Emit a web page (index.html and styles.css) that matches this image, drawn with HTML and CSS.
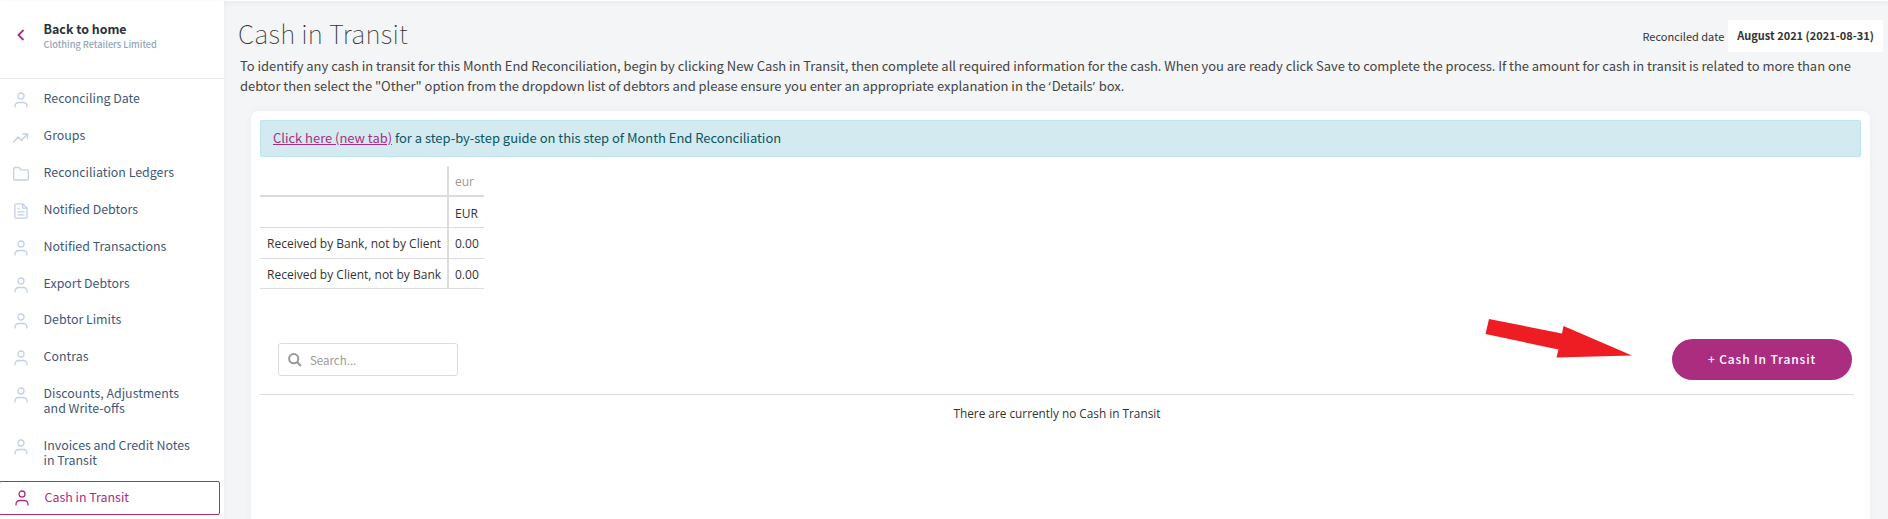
FILE: index.html
```html
<!DOCTYPE html>
<html lang="en">
<head>
<meta charset="utf-8">
<meta name="viewport" content="width=device-width, initial-scale=1.0">
<title>Cash in Transit</title>
<link rel="stylesheet" href="styles.css">
</head>
<body>
<svg class="sprite">
    <symbol id="user" viewBox="0 0 16 16"><circle cx="8" cy="4" r="3"/><path d="M2 15.5v-1.3a3.7 3.7 0 0 1 3.7-3.7h4.6a3.7 3.7 0 0 1 3.7 3.7v1.3"/></symbol>
    <symbol id="trend" viewBox="0 0 16 16"><path d="M.5 13.500l4.500-5.500 3.500 3.500L14.500 5M9.500 5h5v5"/></symbol>
    <symbol id="folder" viewBox="0 0 16 16"><path d="M2 1.5h4l2 2.4h6c.8 0 1.3.5 1.3 1.2v7.6c0 .8-.5 1.3-1.3 1.3H2c-.8 0-1.3-.5-1.3-1.3V2.8c0-.8.5-1.3 1.3-1.3z"/></symbol>
    <symbol id="file" viewBox="0 0 16 16"><path d="M3 .8h6.8L14 5v9c0 .7-.4 1.2-1.1 1.2H3c-.7 0-1.1-.5-1.1-1.2V2C1.900 1.300 2.300.8 3 .8zM9.600 1v4.200H14M4.500 5.800h2M4.500 8.800h7M4.500 11.800h7"/></symbol>
</svg>
<div class="page">
    <nav class="sidebar">
        <a class="back" href="#">
            <svg class="chevron" viewBox="0 0 8 12"><path d="M6.500 1L1.500 6l5 5"/></svg>
            <span>
                <strong>Back to home</strong>
                <small>Clothing Retailers Limited</small>
            </span>
        </a>
        <ul class="menu">
            <li><a href="#"><svg class="icon"><use href="#user"/></svg><span>Reconciling Date</span></a></li>
            <li><a href="#"><svg class="icon"><use href="#trend"/></svg><span>Groups</span></a></li>
            <li><a href="#"><svg class="icon"><use href="#folder"/></svg><span>Reconciliation Ledgers</span></a></li>
            <li><a href="#"><svg class="icon"><use href="#file"/></svg><span>Notified Debtors</span></a></li>
            <li><a href="#"><svg class="icon"><use href="#user"/></svg><span>Notified Transactions</span></a></li>
            <li><a href="#"><svg class="icon"><use href="#user"/></svg><span>Export Debtors</span></a></li>
            <li><a href="#"><svg class="icon"><use href="#user"/></svg><span>Debtor Limits</span></a></li>
            <li><a href="#"><svg class="icon"><use href="#user"/></svg><span>Contras</span></a></li>
            <li><a href="#"><svg class="icon"><use href="#user"/></svg><span>Discounts, Adjustments<br>and Write-offs</span></a></li>
            <li><a href="#"><svg class="icon"><use href="#user"/></svg><span>Invoices and Credit Notes<br>in Transit</span></a></li>
            <li class="active"><a href="#"><svg class="icon"><use href="#user"/></svg><span>Cash in Transit</span></a></li>
        </ul>
    </nav>
    <main class="content">
        <header class="top">
            <h1>Cash in Transit</h1>
            <div class="date"><span class="date-label">Reconciled date</span><b>August 2021 (2021-08-31)</b></div>
        </header>
        <p class="intro">To identify any cash in transit for this Month End Reconciliation, begin by clicking New Cash in Transit, then complete all required information for the cash. When you are ready click Save to complete the process. If the amount for cash in transit is related to more than one<br>debtor then select the "Other" option from the dropdown list of debtors and please ensure you enter an appropriate explanation in the <span class="quote">‘</span>Details<span class="quote">’</span> box.</p>
        <section class="card">
            <div class="alert"><a href="#">Click here (new tab)</a> for a step-by-step guide on this step of Month End Reconciliation</div>
            <table class="totals">
                <tr class="head"><th></th><th>eur</th></tr>
                <tr class="currency"><td></td><td>EUR</td></tr>
                <tr><td>Received by Bank, not by Client</td><td>0.00</td></tr>
                <tr><td>Received by Client, not by Bank</td><td>0.00</td></tr>
            </table>
            <div class="toolbar">
                <label class="search">
                    <svg viewBox="0 0 14 14"><circle cx="5.700" cy="5.700" r="4.600"/><path d="M9 9l4 4"/></svg>
                    <input type="text" placeholder="Search...">
                </label>
                <svg class="arrow" viewBox="0 0 147 39"><path d="M4 0L77 14.500 78.500 7 147 36.500 71.500 38.500 73.500 30.500.5 15z"/></svg>
                <button class="add" type="button">+ Cash In Transit</button>
            </div>
            <p class="empty">There are currently no Cash in Transit</p>
        </section>
    </main>
</div>
</body>
</html>
```
FILE: styles.css
```css
* {
    box-sizing: border-box;
}

body {
    margin: 0;
    background: #f4f5f7;
    font-family: "Noto Sans CJK SC", sans-serif;
    font-size: 13px;
    color: #333;
    overflow: hidden;
}

a {
    color: inherit;
    text-decoration: none;
}

.sprite {
    display: none;
}

.page {
    display: flex;
    height: 519px;
    border-top: 1px solid #fff;
}

.sidebar {
    width: 224px;
    flex-shrink: 0;
    background: #fff;
    box-shadow: 0 0 8px rgba(0, 0, 0, 0.04);
}

.back {
    display: flex;
    height: 78px;
    padding: 19px 0 0 17px;
    border-bottom: 1px solid #e8eaec;
}

.chevron {
    width: 8px;
    height: 12px;
    margin: 9px 18.6px 0 0;
    fill: none;
    stroke: #ab2d80;
    stroke-width: 1.8;
}

.back strong, .back small {
    display: block;
}

.back strong {
    font-size: 12.4px;
    line-height: 18px;
    color: #2b303b;
}

.back small {
    font-size: 9.2px;
    line-height: 12px;
    font-weight: 500;
    color: #93a5b8;
}

.menu {
    list-style: none;
    margin: 0;
    padding: 1px 4px 0 0;
}

.menu a {
    display: flex;
    padding: 11px 0 11px 13px;
    font-size: 12.4px;
    line-height: 14.9px;
    color: #3f5878;
}

.icon {
    width: 16px;
    height: 16px;
    margin: 1px 14.6px -3px 0;
    flex-shrink: 0;
    fill: none;
    stroke: #c3d0e3;
    stroke-width: 1.3;
}

.menu .active a {
    margin-top: 2px;
    margin-left: -1px;
    height: 34px;
    padding: 8px 0 0 14px;
    border: 1px solid #ab2d80;
    border-radius: 2px;
    color: #ab2d80;
}

.active .icon {
    margin-top: 0;
    stroke: #ab2d80;
}

.content {
    flex: 1;
    padding-left: 14px;
    box-shadow: inset 0 5px 6px -4px rgba(0, 0, 0, 0.06);
}

.top {
    display: flex;
    justify-content: space-between;
    height: 55px;
    padding: 19px 5px 0 0;
}

h1 {
    margin: -2px 0 0;
    font-size: 26px;
    font-weight: 100;
    line-height: 30px;
    letter-spacing: 0.22px;
    color: #333;
}

.date {
    display: flex;
    align-items: center;
    height: 32px;
    font-size: 11px;
}

.date b {
    margin-left: 4px;
    padding: 0 9px;
    line-height: 31px;
    height: 32px;
    background: #fff;
    border-radius: 2px;
}

.date-label {
    margin-top: -1px;
}

.intro {
    margin: 0 0 15px 2px;
    line-height: 20px;
    letter-spacing: -0.036px;
    white-space: nowrap;
    color: #444;
}

.quote {
    font-family: "Open Sans", sans-serif;
    letter-spacing: 1px;
}

.card {
    height: 420px;
    width: 1619px;
    margin-left: 13px;
    padding: 9px;
    background: #fff;
    border-radius: 8px;
    box-shadow: 0 0 8px rgba(0, 0, 0, 0.04);
}

.alert {
    height: 37px;
    padding-left: 12px;
    line-height: 34px;
    letter-spacing: -0.03px;
    color: #0c5460;
    background: #d3ebf0;
    border: 1px solid #bee5eb;
    border-radius: 2px;
}

.alert a {
    color: #ab2d80;
    text-decoration: underline;
}

.totals {
    margin-top: 9px;
    border-collapse: separate;
    border-spacing: 0;
    font-family: "Open Sans", sans-serif;
    font-size: 12px;
    line-height: 16px;
    color: #333;
}

.totals th, .totals td {
    height: 31px;
    padding: 2px 5px 0 6px;
    border-bottom: 1px solid #dcdcdc;
    white-space: nowrap;
}

.totals th {
    border-bottom-width: 2px;
    font-weight: 400;
    text-align: left;
    color: #999;
}

.totals .currency td {
    padding-top: 4px;
}

.totals tr:last-child td {
    height: 30px;
}

.totals th:first-child, .totals td:first-child {
    width: 189px;
    padding-left: 7px;
    border-right: 2px solid #dcdcdc;
}

.toolbar {
    display: flex;
    align-items: flex-start;
    width: 1594px;
    height: 106px;
    padding: 30px 2px 0 18px;
    border-bottom: 1px solid #dcdcdc;
}

.search {
    display: flex;
    align-items: center;
    width: 180px;
    height: 33px;
    margin-top: 24px;
    padding-left: 9px;
    border: 1px solid #dcdcdc;
    border-radius: 3px;
}

.search svg {
    width: 14px;
    height: 14px;
    margin-right: 8px;
    fill: none;
    stroke: #999;
    stroke-width: 2;
}

.search input {
    width: 130px;
    padding: 0;
    border: 0;
    outline: 0;
    font: 11.5px "Noto Sans CJK SC", sans-serif;
}

.search input::placeholder {
    color: #999;
}

.arrow {
    width: 147px;
    height: 39px;
    margin-left: auto;
    fill: #ee1c23;
}

.add {
    width: 180px;
    height: 41px;
    margin: 20px 0 0 40px;
    padding-bottom: 3px;
    border: 0;
    border-radius: 21px;
    background: #ab2d80;
    color: #fff;
    font: 500 12px "Noto Sans CJK SC", sans-serif;
    letter-spacing: 0.85px;
}

.empty {
    width: 1594px;
    margin: 9px 0 0;
    text-align: center;
    font-family: "Open Sans", sans-serif;
    font-size: 11.8px;
    line-height: 18px;
}
```
